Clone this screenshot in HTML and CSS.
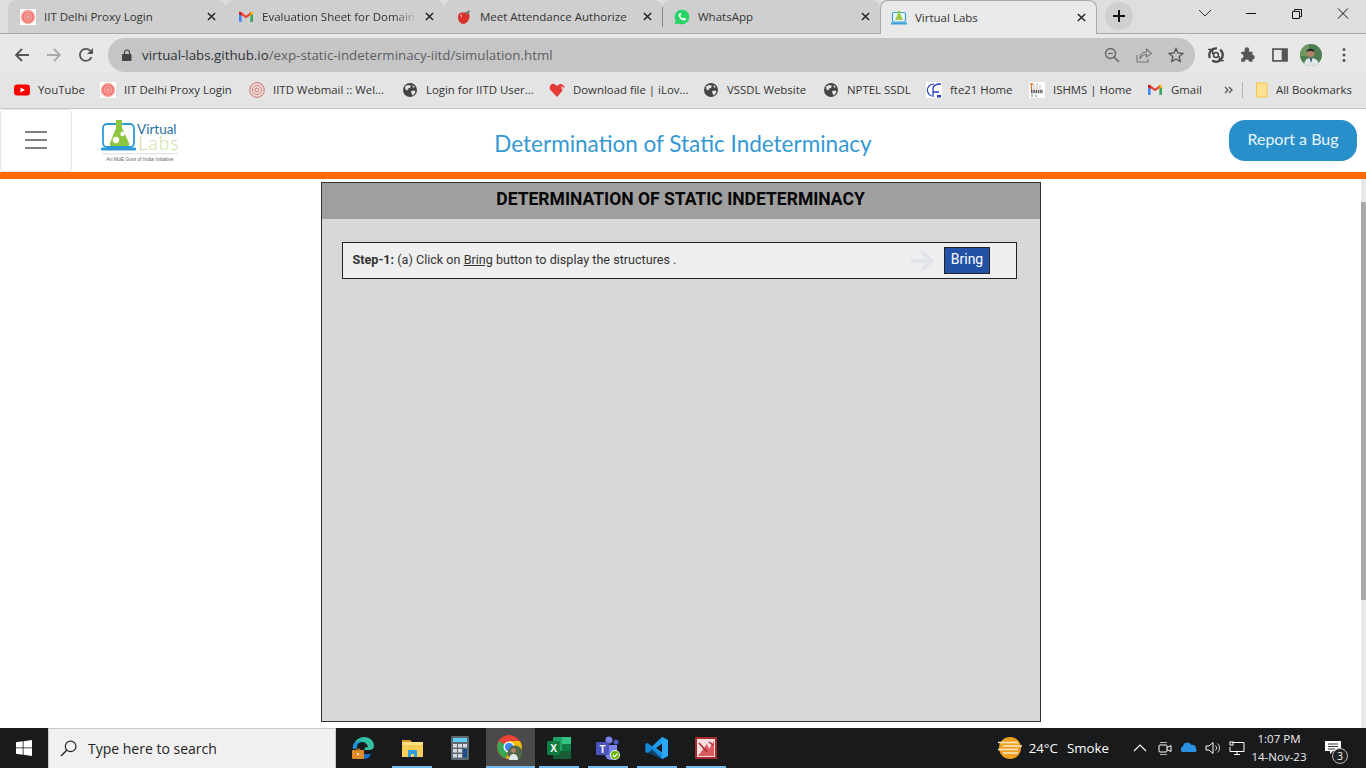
FILE: index.html
```html
<!DOCTYPE html>
<html lang="en">
<head>
<meta charset="utf-8">
<title>Virtual Labs</title>
<link rel="stylesheet" href="styles.css">
</head>
<body>
<svg class="sprite" aria-hidden="true">
  <symbol id="iit" viewBox="0 0 16 16"><rect width="16" height="16" fill="#fff"/><circle cx="8" cy="8" r="7.2" fill="#f4a6a0"/><circle cx="8" cy="8" r="5" fill="none" stroke="#ee6a62" stroke-width="1.2"/><circle cx="8" cy="8" r="2.4" fill="none" stroke="#f07f78" stroke-width="1.2"/></symbol>
  <symbol id="iitd" viewBox="0 0 16 16"><circle cx="8" cy="8" r="7.3" fill="#f3dcd8" stroke="#c98a84" stroke-width="1.2"/><circle cx="8" cy="8" r="4.6" fill="none" stroke="#d08a84" stroke-width="1"/><circle cx="8" cy="8" r="2" fill="none" stroke="#c77a74" stroke-width="1"/></symbol>
  <symbol id="gmail" viewBox="0 0 16 16"><path d="M1 13V4l2.500-1L3.700 13H2a1 1 0 0 1-1-1z" fill="#4285f4"/><path d="M15 13V4l-2.500-1-.2 10H14a1 1 0 0 0 1-1z" fill="#34a853"/><path d="M1 4.500 3 2.700 8 6.800 8 9.300z" fill="#ea4335"/><path d="M15 4.500 13 2.700 8 6.800 8 9.300z" fill="#ea4335"/><path d="M12.500 3 15 2.800V5l-2.500 2z" fill="#fbbc04"/><path d="M1 2.800 3.500 3v4L1 5z" fill="#c5221f"/></symbol>
  <symbol id="globe" viewBox="0 0 16 16"><circle cx="8" cy="8" r="7" fill="#444"/><path d="M3 4.500 6 3l3 .8-1 2.200-2 .5-.5 2L3.500 7.500zM9 9l3.500-.5 1 1.500-2.500 3.500-1-1zM10.500 3l2.500 2-2 .8z" fill="#e8e8e8"/></symbol>
  <symbol id="close" viewBox="0 0 10 10"><path d="M1 1l8 8M9 1l-8 8" stroke="#222" stroke-width="1.600" fill="none"/></symbol>
</svg>
<div class="screen">
  <div class="tabstrip">
    <div class="tab tab-sep"><svg class="fav"><use href="#iit"/></svg><span class="tab-title">IIT Delhi Proxy Login</span><svg class="tab-x"><use href="#close"/></svg></div>
    <div class="tab tab-sep"><svg class="fav"><use href="#gmail"/></svg><span class="tab-title tab-fade">Evaluation Sheet for Domain</span><svg class="tab-x"><use href="#close"/></svg></div>
    <div class="tab tab-sep"><svg class="fav" viewBox="0 0 16 16"><path d="M2 8c0-4 3-5 6-4.500 3-.8 6 .5 5.500 4.500C13 12 10 15 7.500 15 4.500 15 2 12 2 8z" fill="#d8322c"/><path d="M9 4l4-3 1 2-3 3z" fill="#777"/><path d="M4 6.500 6 5v4z" fill="#f0a0a0"/></svg><span class="tab-title">Meet Attendance Authorize</span><svg class="tab-x"><use href="#close"/></svg></div>
    <div class="tab"><svg class="fav" viewBox="0 0 16 16"><path d="M.5 15.500 1.600 11.500A7.300 7.300 0 1 1 4.500 14.400z" fill="#25d366"/><path d="M5.600 4.200c-.7.500-1.200 1.500-.9 2.700.6 2 2.500 4 4.600 4.600 1.200.3 2.200-.2 2.700-1 .2-.4.100-.8-.2-1l-1.500-.8c-.3-.1-.5 0-.7.200l-.5.6c-1.300-.5-2.300-1.500-2.800-2.800l.6-.6c.2-.2.200-.4.100-.7L7.300 4.500c-.3-.5-1.100-.6-1.700-.3z" fill="#fff"/></svg><span class="tab-title">WhatsApp</span><svg class="tab-x"><use href="#close"/></svg></div>
    <div class="tab tab-active"><svg class="fav" viewBox="0 0 16 16"><rect x="1.500" y="2.500" width="13" height="9.500" rx="1.500" fill="#eaf6fb" stroke="#3aa0d8" stroke-width="1.200"/><path d="M6.700 1h2.600v3L12 10H4l2.700-6z" fill="#9ccc4a"/><rect y="12.500" width="16" height="2" fill="#3aa0d8"/></svg><span class="tab-title">Virtual Labs</span><svg class="tab-x"><use href="#close"/></svg></div>
    <div class="newtab"><svg viewBox="0 0 14 14" class="newtab-plus"><path d="M7 1v12M1 7h12" stroke="#111" stroke-width="2" fill="none"/></svg></div>
    <div class="winctl">
      <svg class="wc" viewBox="0 0 46 20"><path d="M17 6l6 6 6-6" stroke="#333" stroke-width="1" fill="none"/></svg>
      <svg class="wc" viewBox="0 0 46 20"><path d="M18 9.500h10" stroke="#111" stroke-width="1"/></svg>
      <svg class="wc" viewBox="0 0 46 20"><path d="M18.500 7.500h7v7h-7zM20.500 7.500v-2h7v7h-2" stroke="#111" stroke-width="1" fill="none"/></svg>
      <svg class="wc" viewBox="0 0 46 20"><path d="M18 4.500l10 10M28 4.500l-10 10" stroke="#111" stroke-width="1" fill="none"/></svg>
    </div>
  </div>
  <div class="toolbar">
    <svg class="navicon" viewBox="0 0 16 16"><path d="M15 8H2M8 2 2 8l6 6" stroke="#555" stroke-width="1.800" fill="none"/></svg>
    <svg class="navicon" viewBox="0 0 16 16"><path d="M1 8h13M8 2l6 6-6 6" stroke="#aaa" stroke-width="1.800" fill="none"/></svg>
    <svg class="navicon" viewBox="0 0 16 16"><path d="M13.500 10A6 6 0 1 1 12.500 4" stroke="#555" stroke-width="1.800" fill="none"/><path d="M15 1v6H9z" fill="#555"/></svg>
    <div class="omnibox">
      <svg class="lock" viewBox="0 0 10 12"><path d="M2.500 5V3.500a2.500 2.500 0 0 1 5 0V5" stroke="#444" stroke-width="1.200" fill="none"/><rect y="5" width="9.500" height="7" rx="1" fill="#444"/></svg>
      <span class="url"><span class="url-host">virtual-labs.github.io</span>/exp-static-indeterminacy-iitd/simulation.html</span>
      <span class="omni-actions">
        <svg class="omni-ic" viewBox="0 0 16 16"><circle cx="6.500" cy="6.500" r="5" stroke="#666" stroke-width="1.400" fill="none"/><path d="M10 10l5 5" stroke="#666" stroke-width="1.600"/><path d="M4 6.500h5" stroke="#666" stroke-width="1.200"/></svg>
        <svg class="omni-ic" viewBox="0 0 16 16"><path d="M1 8v7h11v-3" stroke="#777" stroke-width="1.100" fill="none"/><path d="M4 12c0-5 3-7 6.500-7V2L15.500 6.500 10.500 10V7.500C7.500 7.500 5.500 9 4 12z" stroke="#777" stroke-width="1.100" fill="none"/></svg>
        <svg class="omni-ic" viewBox="0 0 16 16"><path d="M8 1.500l2 4.500 4.800.5-3.600 3.200 1 4.800L8 12l-4.200 2.500 1-4.800L1.200 6.500 6 6z" stroke="#555" stroke-width="1.300" fill="none"/></svg>
      </span>
    </div>
    <div class="tb-actions">
      <svg class="tb-ic" viewBox="0 0 16 16"><circle cx="8" cy="8" r="6" stroke="#444" stroke-width="2" fill="none" stroke-dasharray="13 3"/><circle cx="8" cy="8" r="2.200" stroke="#444" stroke-width="1.300" fill="none"/><path d="M1 3h4v4M15 13h-4V9" stroke="#444" stroke-width="1.300" fill="none"/></svg>
      <svg class="tb-ic" viewBox="0 0 16 16"><path d="M1 6h3V4a2 2 0 0 1 4 0v2h3v3a2 2 0 0 1 0 4v2H8a2 2 0 0 0-4 0H1v-3a2 2 0 0 0 0-4z" fill="#555" transform="translate(1 -1)"/></svg>
      <svg class="tb-ic" viewBox="0 0 16 16"><rect x="1" y="2" width="14" height="12" fill="#555"/><rect x="2.500" y="3.500" width="7" height="9" fill="#e8e8e8"/></svg>
      <svg class="avatar" viewBox="0 0 22 22"><clipPath id="avclip"><circle cx="11" cy="11" r="11"/></clipPath><g clip-path="url(#avclip)"><rect width="22" height="22" fill="#4f7d52"/><rect width="9" height="12" fill="#6f9a60"/><path d="M4 22c0-6 3-8 7-8s8 2 8 8z" fill="#dfe8ea"/><circle cx="10.500" cy="9" r="4" fill="#b08468"/><path d="M6.500 8c0-4 8-4.500 8 0-2-1.500-6-1.500-8 0z" fill="#20242a"/><path d="M9.500 14l1.500 5 1.500-5z" fill="#3a5a7a"/></g></svg>
      <svg class="kebab" viewBox="0 0 4 16"><circle cx="2" cy="2.500" r="1.500" fill="#555"/><circle cx="2" cy="8" r="1.500" fill="#555"/><circle cx="2" cy="13.500" r="1.500" fill="#555"/></svg>
    </div>
  </div>
  <div class="bookmarks">
    <div class="bm"><svg class="fav" viewBox="0 0 16 16"><rect y="2.500" width="16" height="11" rx="3" fill="#f00"/><path d="M6.500 5.500 11 8l-4.500 2.500z" fill="#fff"/></svg><span>YouTube</span></div>
    <div class="bm"><svg class="fav"><use href="#iit"/></svg><span>IIT Delhi Proxy Login</span></div>
    <div class="bm"><svg class="fav"><use href="#iitd"/></svg><span>IITD Webmail :: Wel...</span></div>
    <div class="bm"><svg class="fav"><use href="#globe"/></svg><span>Login for IITD User...</span></div>
    <div class="bm"><svg class="fav" viewBox="0 0 16 16"><path d="M8 15 1 7.500C-.5 4 3 0 6 2.500L8 4l2-1.500c1.500-.8 3-.5 4 .5l2 2.500-3.500 1.500 1 1.500z" fill="#e53935"/><path d="M12 4l3.500 1.500-3 1.500z" fill="#f3c0bb"/></svg><span>Download file | iLov...</span></div>
    <div class="bm"><svg class="fav"><use href="#globe"/></svg><span>VSSDL Website</span></div>
    <div class="bm"><svg class="fav"><use href="#globe"/></svg><span>NPTEL SSDL</span></div>
    <div class="bm"><svg class="fav" viewBox="0 0 16 16"><rect width="16" height="16" fill="#fff"/><path d="M8 2C3.500 2 1 5.500 1.500 9c.4 2.500 2 4 4 5" stroke="#2a3fc4" stroke-width="1.200" fill="none"/><path d="M7 7V15M7 7c0-3 2-5 8-5M7 10h6" stroke="#2a3fc4" stroke-width="1.300" fill="none"/><path d="M11 13h4v2.500h-4z" fill="#2a3fc4"/></svg><span>fte21 Home</span></div>
    <div class="bm"><svg class="fav" viewBox="0 0 16 16"><rect width="16" height="16" fill="#fff"/><path d="M1 2h3M2.500 2v6" stroke="#d9772d" stroke-width="1.300"/><path d="M2 9.500h12" stroke="#555" stroke-width="3.500" stroke-dasharray="1.500 .8"/><path d="M5 2v5M8 1v6M11 3v4" stroke="#bbb" stroke-width="1"/><path d="M3 12v3M7 13v2" stroke="#4a8a4a" stroke-width="1"/></svg><span>ISHMS | Home</span></div>
    <div class="bm"><svg class="fav"><use href="#gmail"/></svg><span>Gmail</span></div>
    <div class="bm-more"><svg viewBox="0 0 9 8" class="chev"><path d="M1 1l3 3-3 3M5 1l3 3-3 3" stroke="#555" stroke-width="1.300" fill="none"/></svg></div>
    <div class="bm-sep"></div>
    <div class="bm bm-last"><svg class="fav" viewBox="0 0 16 16"><path d="M2.500 1h9.500a1 1 0 0 1 1 1v13H3.500a1 1 0 0 1-1-1z" fill="#fde293" stroke="#f6c344" stroke-width="1"/></svg><span>All Bookmarks</span></div>
  </div>
  <header class="site-header">
    <div class="site-left">
      <button class="burger" type="button" aria-label="Menu"><span></span><span></span><span></span></button>
      <svg class="logo" viewBox="0 0 80 44">
        <rect x="3" y="4" width="31" height="23" rx="4" fill="#fff" stroke="#2f9bd6" stroke-width="1.800"/>
        <path d="M16 0h6v8l7 15a2 2 0 0 1-2 3H12a2 2 0 0 1-2-3l6-15z" fill="#8cc63f"/>
        <circle cx="16" cy="20" r="3.500" fill="#fff" stroke="#8cc63f" stroke-dasharray="2 1"/>
        <circle cx="22.500" cy="14" r="2.200" fill="#fff"/>
        <rect x="1" y="27.500" width="35" height="3" rx="1" fill="#2f9bd6"/>
        <text x="37" y="14" class="logo-virtual">Virtual</text>
        <text x="38" y="30" class="logo-labs">Labs</text>
        <rect x="2" y="33.500" width="76" height=".7" fill="#ccc"/>
        <text x="40" y="40.500" class="logo-tag" text-anchor="middle">An MoE Govt of India Initiative</text>
      </svg>
    </div>
    <h1 class="site-title">Determination of Static Indeterminacy</h1>
    <div class="site-right"><a class="report" href="#">Report a Bug</a></div>
  </header>
  <div class="accent"></div>
  <div class="viewport">
    <main class="page">
      <section class="panel">
        <h2 class="panel-head">DETERMINATION OF STATIC INDETERMINACY</h2>
        <div class="panel-body">
          <div class="step">
            <p class="step-text"><strong>Step-1:</strong> (a) Click on <u>Bring</u> button to display the structures .</p>
            <svg class="step-arrow" viewBox="0 0 24 22"><path d="M2 11h18M12 3l8 8-8 8" stroke="#e1e5eb" stroke-width="4.500" stroke-linecap="round" stroke-linejoin="round" fill="none"/></svg>
            <button class="bring" type="button">Bring</button>
          </div>
        </div>
      </section>
    </main>
    <div class="scrolltrack"><div class="scrollthumb"></div></div>
  </div>
  <footer class="taskbar">
    <div class="start"><svg viewBox="0 0 16 16" class="winlogo"><path d="M0 2.300 6.700 1.300V7.500H0zM7.500 1.200 16 0V7.500H7.500zM0 8.300H6.700V14.700L0 13.700zM7.500 8.300H16V16L7.500 14.800z" fill="#fff"/></svg></div>
    <div class="search"><svg viewBox="0 0 16 16" class="search-ic"><circle cx="10" cy="6" r="5" stroke="#222" stroke-width="1.100" fill="none"/><path d="M6.300 9.700 1 15" stroke="#222" stroke-width="1.300"/></svg><span>Type here to search</span></div>
    <div class="apps">
      <div class="app"><svg class="app-ic" viewBox="0 0 24 24"><path d="M2 13C2 5 8 1 13 1c6 0 10 4 10 9 0 3-3 4-5 4h-5c0-2 2-3 4-3-.5-3-3-5-6-5-5 0-7 4-7 7z" fill="#35c1a0"/><path d="M2 13C1 8 5 5 8 5c2 0 3 1 3 1-3 0-5 2-5 6z" fill="#1b8fe0"/><rect x="1" y="14" width="12" height="9" rx="1" fill="#e08a2c"/><rect x="5" y="12.500" width="4" height="2" fill="#a8631d"/><rect x="6" y="17" width="2" height="2" fill="#fde6b8"/><path d="M13 18h7c-1 3-4 5-7 5z" fill="#1671c4"/></svg></div>
      <div class="app app-on"><svg class="app-ic" viewBox="0 0 24 24"><path d="M2 4h8l2 2H2z" fill="#d99a1f"/><rect x="2" y="6" width="21" height="15" fill="#f8cf56"/><rect x="2" y="6" width="21" height="3" fill="#fadf87"/><path d="M8 21v-6a1 1 0 0 1 1-1h7a1 1 0 0 1 1 1v6h-3v-3h-3v3z" fill="#2d9fe0"/></svg></div>
      <div class="app"><svg class="app-ic" viewBox="0 0 24 24"><rect x="2" y="0" width="18" height="24" rx="1.500" fill="#5d6a73"/><rect x="4" y="2" width="14" height="4" fill="#62cdf0"/><g fill="#d6dbdf"><rect x="4" y="8" width="4" height="3.500"/><rect x="9" y="8" width="4" height="3.500"/><rect x="14" y="8" width="4" height="3.500"/><rect x="4" y="13" width="4" height="3.500"/><rect x="9" y="13" width="4" height="3.500"/><rect x="4" y="18" width="4" height="3.500"/><rect x="9" y="18" width="4" height="3.500"/></g><rect x="14" y="13" width="4" height="8.500" fill="#1d4f8c"/></svg></div>
      <div class="app app-active"><svg class="app-ic app-ic-lg" viewBox="0 0 26 26"><circle cx="12" cy="12" r="12" fill="#ea4335"/><path d="M12 12 2 6A12 12 0 0 0 9 23.600z" fill="#34a853"/><path d="M12 6h11A12 12 0 0 1 9 23.600L14 12z" fill="#fbbc04"/><circle cx="12" cy="12" r="5.500" fill="#fff"/><circle cx="12" cy="12" r="4.200" fill="#4285f4"/><circle cx="18" cy="18" r="7.500" fill="#51664a"/><circle cx="16.500" cy="15.500" r="2.400" fill="#b08468"/><path d="M12 25c0-4 2-6 4.500-6s4.500 2 4.500 6z" fill="#dfe8ea"/></svg></div>
      <div class="app app-on"><svg class="app-ic" viewBox="0 0 24 24"><rect x="6" y="1" width="18" height="22" rx="1" fill="#21a366"/><rect x="15" y="1" width="9" height="7" fill="#33c481"/><rect x="15" y="8" width="9" height="7" fill="#107c41"/><rect x="6" y="15" width="18" height="8" fill="#185c37"/><rect x="0" y="5" width="13" height="14" rx="1" fill="#107c41"/><text x="6.500" y="16" class="xl-x" text-anchor="middle">X</text></svg></div>
      <div class="app app-on"><svg class="app-ic" viewBox="0 0 24 24"><circle cx="13" cy="4" r="3.500" fill="#7b83eb"/><circle cx="20" cy="6" r="2.500" fill="#5059c9"/><path d="M9 9h12v9a6 6 0 0 1-12 0z" fill="#7b83eb"/><rect x="0" y="6" width="13" height="13" rx="1" fill="#4b53bc"/><text x="6.500" y="16.500" class="xl-x" text-anchor="middle">T</text><circle cx="19" cy="19" r="5" fill="#e8f3e0"/><circle cx="19" cy="19" r="4" fill="#6bb700"/><path d="M16.800 19l1.700 1.700 3-3" stroke="#fff" stroke-width="1.200" fill="none"/></svg></div>
      <div class="app app-on"><svg class="app-ic" viewBox="0 0 24 24"><path d="M17 1 23 4V20L17 23 7 13.500 2.500 17 .5 16V8L2.500 7 7 10.500zM17 7.500 11 12l6 4.500z" fill="#1f9cf0"/><path d="M17 1 23 4V20L17 23z" fill="#2aa7f5"/><path d="M.5 8 2.500 7 17 18.500V23L.5 16z" fill="#0a72c0" opacity=".45"/></svg></div>
      <div class="app app-on"><svg class="app-ic" viewBox="0 0 24 24"><rect x="1" y="1" width="22" height="22" fill="#a62a2e"/><rect x="3" y="3" width="18" height="18" fill="#f6dcdc"/><path d="M4 20 13 8l2 5 5-8v15z" fill="#d95a5f"/><path d="M5 7l8 9M15 6l4 3" stroke="#a62a2e" stroke-width="1.500"/></svg></div>
    </div>
    <div class="tray">
      <svg class="weather" viewBox="0 0 24 24"><circle cx="12" cy="12" r="11" fill="#f0a020"/><path d="M0 6.500h20M5 10h19M0 13.500h20M5 17h15" stroke="#f7e9c8" stroke-width="1.500"/></svg>
      <span class="weather-text"><span>24°C</span><span>Smoke</span></span>
      <svg class="tray-ic chevron" viewBox="0 0 14 8"><path d="M1 7l6-6 6 6" stroke="#fff" stroke-width="1.100" fill="none"/></svg>
      <svg class="tray-ic" viewBox="0 0 16 16"><rect x="2" y="5" width="8" height="7" rx="1" stroke="#fff" fill="none"/><path d="M10 7.500 14 5.500v6l-4-2" stroke="#fff" fill="none"/><path d="M3 2.500h7M3 14.500h7" stroke="#bbb"/></svg>
      <svg class="tray-ic" viewBox="0 0 16 16"><path d="M1 12a3 3 0 0 1 1-5.500 4.500 4.500 0 0 1 8.500-1.500A3.500 3.500 0 0 1 15 9a2 2 0 0 1-.500 3z" fill="#2b8fe0"/></svg>
      <svg class="tray-ic" viewBox="0 0 16 16"><path d="M1 6h3l4-3.500v11L4 10H1z" stroke="#fff" fill="none"/><path d="M10.500 5.500a3.500 3.500 0 0 1 0 5M12.500 3.500a6 6 0 0 1 0 9" stroke="#ccc" fill="none"/></svg>
      <svg class="tray-ic" viewBox="0 0 16 16"><path d="M4 2.500h11v9H1V7" stroke="#fff" fill="none"/><rect x="1" y="2" width="3" height="3" stroke="#fff" fill="none"/><path d="M8 11.500V14M5 14.500h6" stroke="#fff"/></svg>
      <div class="clock"><span>1:07 PM</span><span>14-Nov-23</span></div>
      <div class="notif"><svg viewBox="0 0 16 14" class="notif-ic"><path d="M0 0h16v10H8L5 13v-3H0z" fill="#fff"/><path d="M3 3h10M3 5.500h10M3 8h7" stroke="#333"/></svg><span class="badge">3</span></div>
    </div>
  </footer>
</div>
</body>
</html>
```
FILE: styles.css
```css
* { box-sizing: border-box; }
html, body { margin: 0; padding: 0; height: 100%; overflow: hidden; background: #fff; }
.sprite { width: 0; height: 0; display: block; overflow: hidden; }
.screen { width: 1366px; height: 768px; display: flex; flex-direction: column; font-family: "Open Sans", "Noto Sans", sans-serif; }

.tabstrip { height: 34px; flex: none; display: flex; align-items: flex-end; background: #dedede; padding-left: 8px; border-bottom: 1px solid #a9a9a9; }
.tab { width: 218px; height: 33px; flex: none; display: flex; align-items: center; padding: 0 8px 0 12px; background: #cfcfcf; border-radius: 8px 8px 0 0; font-size: 11.500px; color: #333; }
.tab-sep { position: relative; }
.tab-sep::after { content: ""; position: absolute; right: -1px; top: 7px; height: 20px; width: 1px; background: #8a8a8a; }
.tab-active { width: 217px; height: 34px; margin-bottom: -1px; background: #e9e9e9; border: 1px solid #a9a9a9; border-bottom: 0; padding-left: 10px; }
.fav { width: 16px; height: 16px; flex: none; }
.tab-title { flex: 1; margin-left: 8px; white-space: nowrap; overflow: hidden; }
.tab-fade { -webkit-mask-image: linear-gradient(90deg, #000 85%, transparent); mask-image: linear-gradient(90deg, #000 85%, transparent); }
.tab-x { width: 9px; height: 9px; flex: none; margin-left: 8px; margin-right: 2px; }
.newtab { width: 28px; height: 28px; flex: none; margin: 0 0 2px 8px; border-radius: 50%; background: #cfcfcf; display: flex; align-items: center; justify-content: center; align-self: center; }
.newtab-plus { width: 14px; height: 14px; }
.winctl { margin-left: auto; display: flex; align-self: flex-start; padding-top: 4px; }
.wc { width: 46px; height: 20px; display: block; }

.toolbar { height: 38px; flex: none; display: flex; align-items: center; background: #e8e8e8; padding: 4px 0 0 14px; }
.navicon { width: 16px; height: 16px; flex: none; margin-right: 16px; }
.omnibox { width: 1087px; height: 34px; margin-left: -2px; flex: none; border-radius: 17px; background: #c5c5c5; display: flex; align-items: center; padding: 0 11px 0 14px; }
.lock { width: 10px; height: 12px; flex: none; }
.url { margin-left: 10px; font-size: 13.300px; color: #5a5f66; white-space: nowrap; }
.url-host { color: #2e3238; }
.omni-actions { margin-left: auto; display: flex; gap: 16px; align-items: center; }
.omni-ic { width: 16px; height: 16px; }
.tb-actions { display: flex; align-items: center; margin-left: 12px; }
.tb-ic { width: 18px; height: 18px; margin-right: 14px; flex: none; }
.avatar { width: 22px; height: 22px; flex: none; margin-left: -3px; }
.kebab { width: 4px; height: 16px; margin-left: 20px; flex: none; }

.bookmarks { height: 37px; flex: none; display: grid; grid-template-columns: 86px 149px 153px 147px 154px 120px 103px 103px 118px 77px 18px 12px 112px; background: #e4e4e4; padding: 0 0 1px 14px; align-items: center; font-size: 11.400px; color: #333; border-bottom: 1px solid #c8c8c8; }
.bm { display: flex; align-items: center; gap: 8px; white-space: nowrap; }
.bm-last { gap: 6px; }
.bm-more { display: flex; }
.chev { width: 9px; height: 8px; }
.bm-sep { width: 1px; height: 16px; background: #b5b5b5; }

.site-header { height: 63px; flex: none; display: grid; grid-template-columns: 1fr auto 1fr; align-items: center; background: #fff; }
.site-left { display: flex; align-items: center; height: 100%; }
.burger { width: 72px; height: 63px; flex: none; background: #fff; border: 1px solid #e8e8e8; border-radius: 3px; display: flex; flex-direction: column; justify-content: center; align-items: center; gap: 6px; padding: 0 0 2px; }
.burger span { display: block; width: 22px; height: 2px; background: #808080; }
.logo { width: 80px; height: 44px; margin-left: 28px; flex: none; margin-top: 2px; }
.logo-virtual { font: 13.500px "Lato", sans-serif; fill: #1f6fa5; }
.logo-labs { font: 300 19px "Lato", sans-serif; fill: #c6e19e; letter-spacing: 1px; }
.logo-tag { font: 5px "Liberation Sans", sans-serif; fill: #666; }
.site-title { margin: 6px 0 0; font: 400 22.500px "Lato", "Open Sans", sans-serif; color: #3498d3; white-space: nowrap; }
.site-right { display: flex; justify-content: flex-end; padding-right: 9px; }
.report { width: 128px; height: 41px; padding-bottom: 5px; border-radius: 16px; background: #288fca; color: #e8f6ff; font: 400 16px "Lato", sans-serif; text-decoration: none; display: flex; align-items: center; justify-content: center; }
.accent { height: 7px; flex: none; background: #ff6a00; }

.viewport { flex: 1; min-height: 0; display: flex; background: #fff; }
.page { flex: 1; padding-top: 3px; min-width: 0; }
.panel { width: 720px; height: 540px; margin: 0 auto; border: 1px solid #333; background: #d9d8d6; font-family: Roboto, sans-serif; }
.panel-head { margin: 0; height: 36px; background: #9f9f9f; color: #050505; font: 700 17.500px/32px Roboto, sans-serif; text-align: center; }
.panel-body { padding: 23px 23px 0 20px; }
.step { height: 37px; border: 1px solid #222; background: #f0eff0; display: flex; align-items: center; padding: 0 26px 0 9px; }
.step-text { margin: 0 0 2px 1px; flex: 1; font-size: 12.600px; color: #333; }
.step-arrow { width: 24px; height: 22px; flex: none; margin-right: 9px; }
.bring { width: 46px; height: 27px; padding: 0 0 4px 1px; flex: none; background: #2251a5; border: 1px solid #222; color: #fff; font: 14px Roboto, sans-serif; }
.scrolltrack { width: 5px; flex: none; background: #e8e8e8; }
.scrollthumb { height: 398px; margin-top: 23px; background: #a8a8a8; }

.taskbar { height: 40px; flex: none; display: flex; background: #191a1c; color: #fff; }
.start { width: 48px; display: flex; align-items: center; justify-content: center; }
.winlogo { width: 16px; height: 16px; }
.search { width: 288px; display: flex; align-items: center; background: #f0f0f0; border: 1px solid #c9c9c9; border-bottom: 0; padding-left: 11px; color: #222; font: 14px "Open Sans", sans-serif; }
.search-ic { width: 17px; height: 17px; margin-right: 11px; }
.apps { display: flex; padding-left: 2.500px; }
.app { width: 49px; display: flex; align-items: center; justify-content: center; padding-bottom: 1px; }
.app-on { background: linear-gradient(#76b9ed, #76b9ed) center bottom / 40px 2px no-repeat; }
.app-active { background: linear-gradient(#76b9ed, #76b9ed) center bottom / 100% 2px no-repeat, #4a4a4a; }
.app-ic { width: 24px; height: 24px; }
.app-ic-lg { width: 26px; height: 26px; }
.xl-x { font: 700 10px "Liberation Sans", sans-serif; fill: #fff; }
.tray { margin-left: auto; display: flex; align-items: center; font-size: 13.300px; }
.weather { width: 24px; height: 24px; flex: none; }
.weather-text { display: flex; gap: 9px; margin: 0 24px 0 7px; white-space: nowrap; font-size: 13.300px; }
.tray-ic { width: 16px; height: 16px; flex: none; margin-right: 8px; }
.chevron { width: 14px; height: 8px; margin-right: 10px; }
.clock { width: 66px; margin-left: -7px; display: flex; flex-direction: column; align-items: center; font-size: 11.500px; line-height: 18px; white-space: nowrap; color: #eee; }
.notif { width: 48px; margin-left: 6px; height: 40px; display: flex; align-items: center; position: relative; padding-left: 7px; }
.notif-ic { width: 16px; height: 14px; }
.badge { position: absolute; left: 14px; top: 20px; width: 16px; height: 16px; border-radius: 50%; border: 1px solid #bbb; background: #222; font-size: 10px; line-height: 14px; text-align: center; }
```
